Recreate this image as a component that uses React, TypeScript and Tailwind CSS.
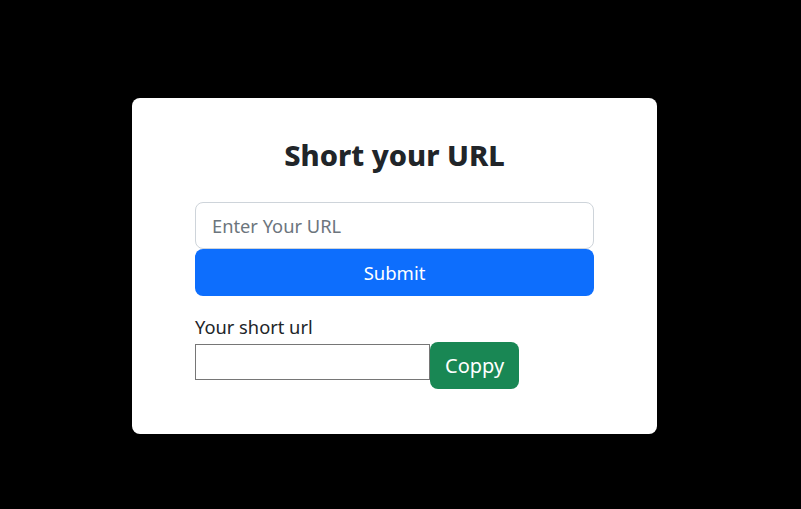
export default function App() {
  return (
    <div className="min-h-[509px] bg-black pl-[132px] pt-[98px] font-['Noto_Sans',sans-serif]">
      <div className="h-[336px] w-[525px] rounded-lg bg-white px-[63px] pt-[40px]">
        <h2 className="text-center text-[29px] font-extrabold leading-[34px] text-[#212529]">Short your URL</h2>
        <input
          type="text"
          placeholder="Enter Your URL"
          className="mt-[30px] block h-[47px] w-full rounded-lg border border-[#ced4da] bg-white px-4 text-[18.3px] text-[#212529] outline-none placeholder:text-[#6c757d]"
        />
        <button className="block h-[47px] w-full rounded-lg bg-[#0d6efd] text-[18.5px] text-white">Submit</button>
        <p className="mt-[16px] text-[18.3px] leading-[30px] text-[#212529]">Your short url</p>
        <div className="flex items-start">
          <input type="text" className="mt-[2px] h-[36px] w-[235px] border border-[#767676] bg-white outline-none" />
          <button className="h-[47px] rounded-lg bg-[#198754] px-[15px] text-xl text-white">Coppy</button>
        </div>
      </div>
    </div>
  );
}
